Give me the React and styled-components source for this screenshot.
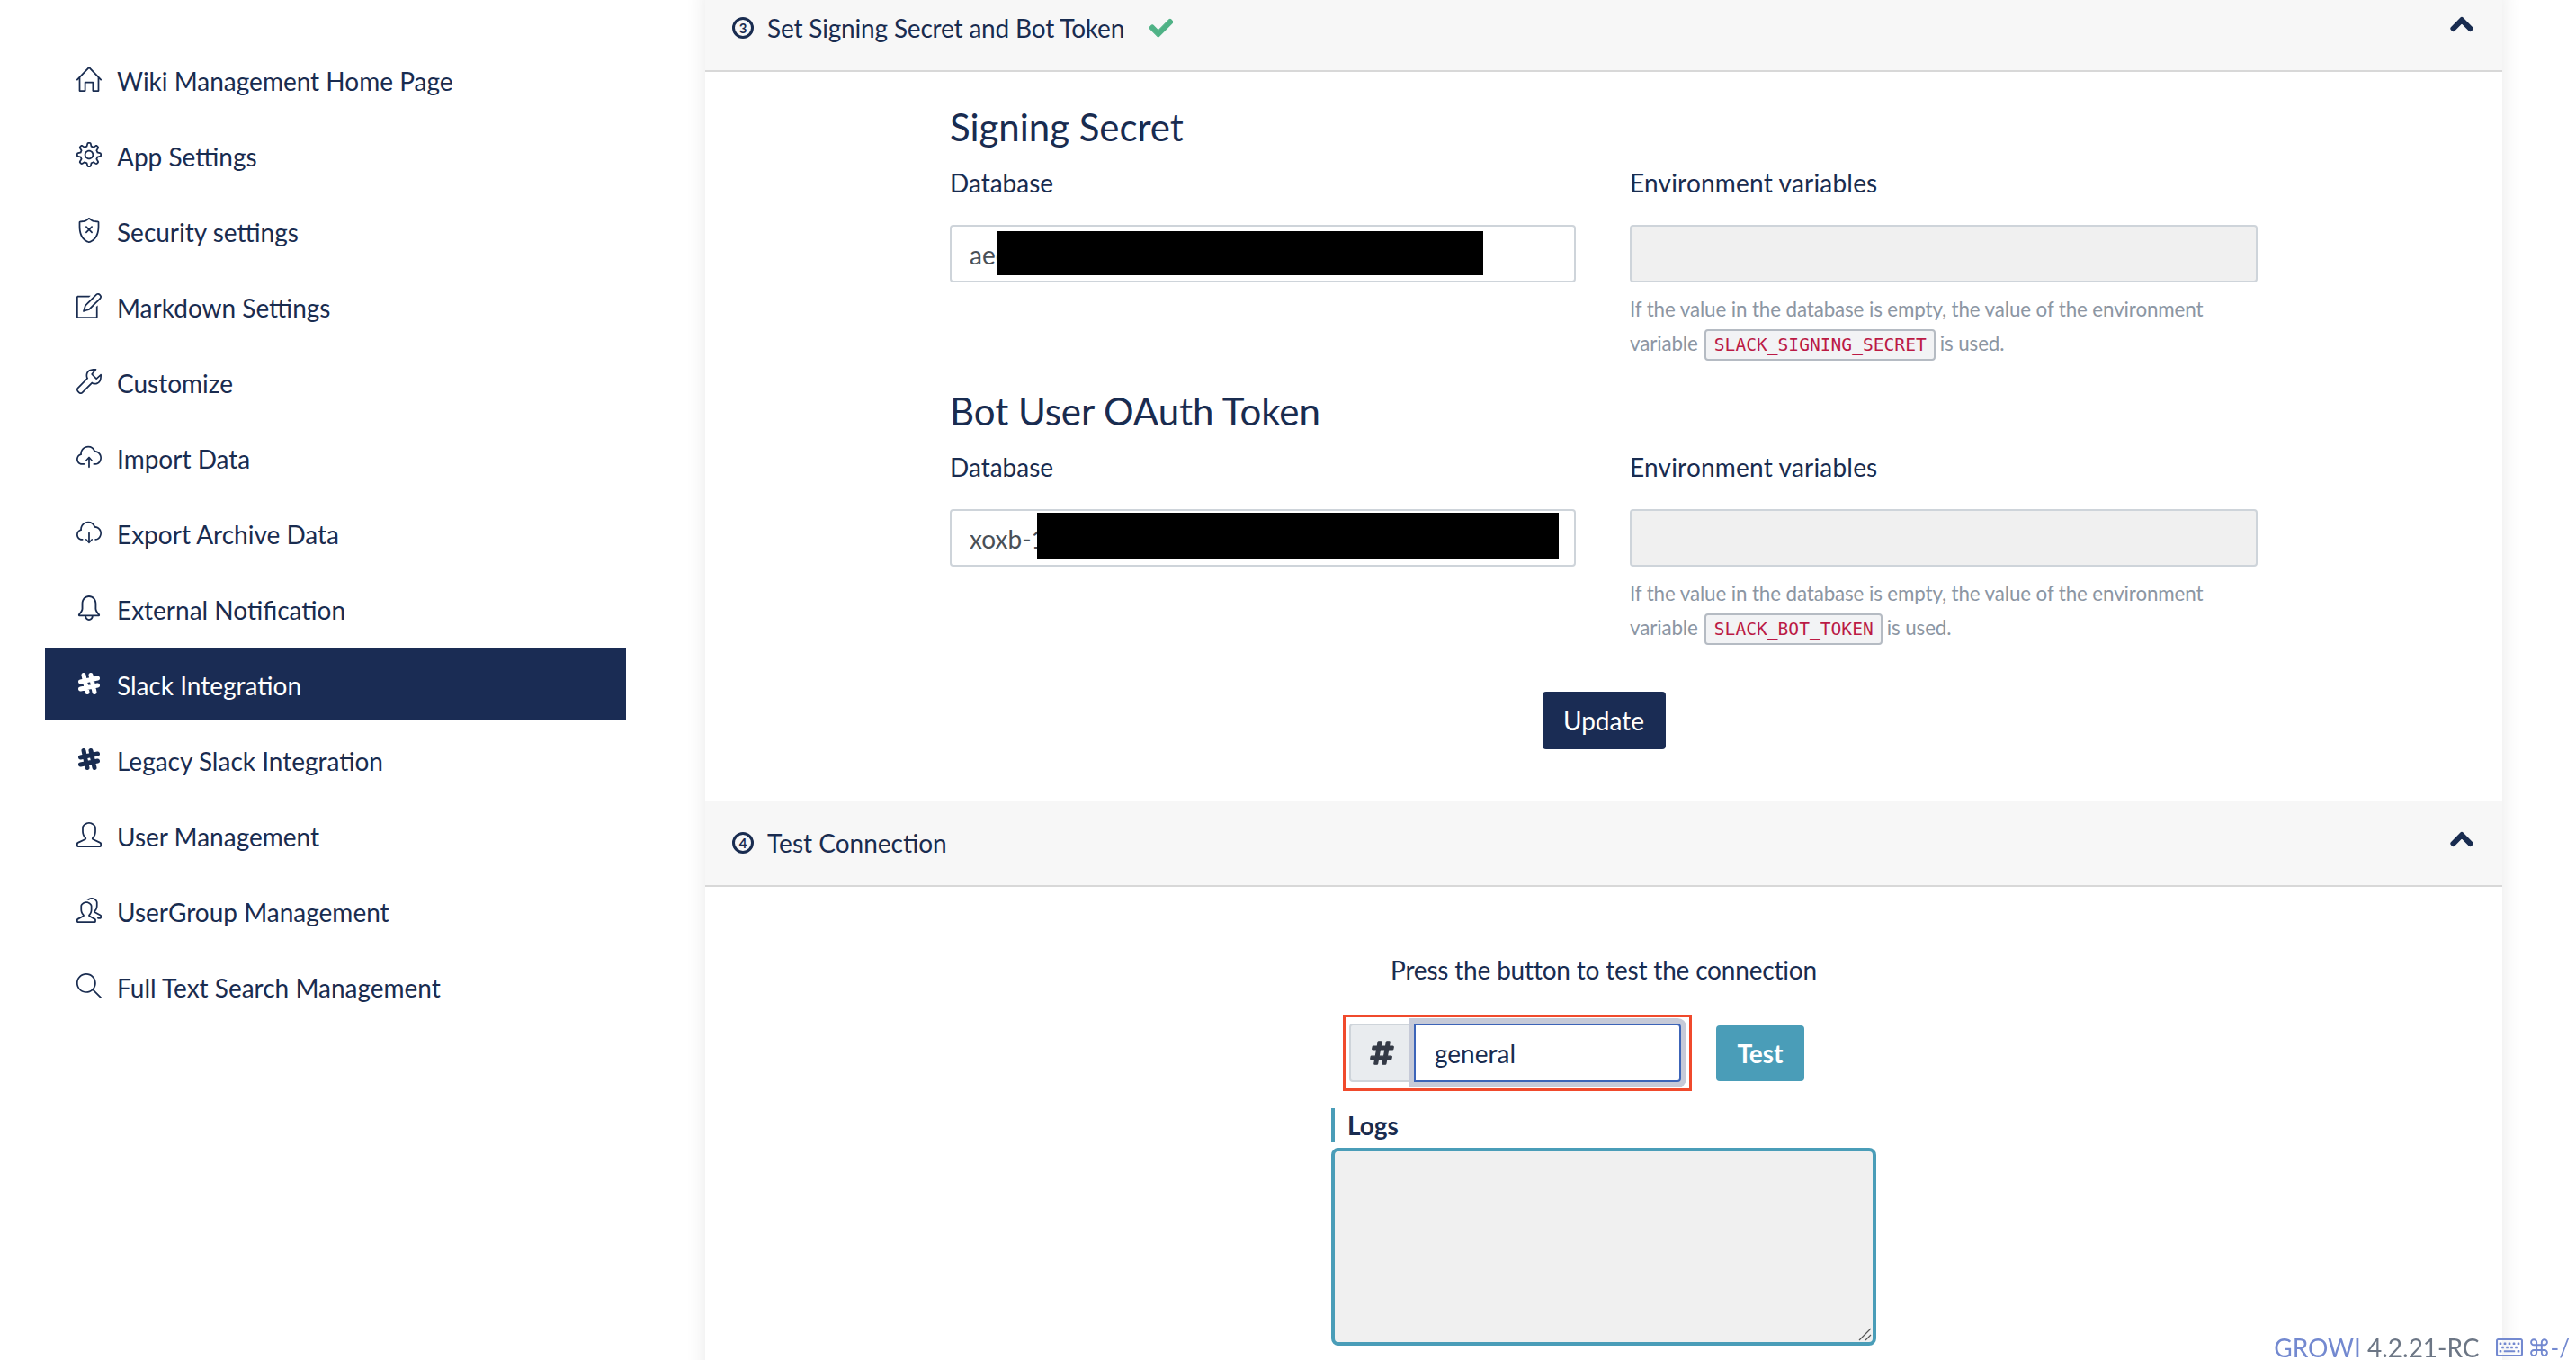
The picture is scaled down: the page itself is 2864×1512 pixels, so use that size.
import React from 'react';
import styled, { createGlobalStyle } from 'styled-components';
import { SlHome, SlSettings, SlShield, SlNote, SlWrench, SlCloudUpload, SlCloudDownload, SlBell, SlUser, SlPeople, SlMagnifier } from 'react-icons/sl';
import { FaCheck, FaChevronUp, FaHashtag, FaRegKeyboard } from 'react-icons/fa';

const navy = '#192c50';
const teal = '#4a9db8';

const Global = createGlobalStyle`
  html, body { margin: 0; padding: 0; background: #fff; height: 1512px; overflow: hidden; }
  body { font-family: Lato, "Noto Sans", sans-serif; font-size: 28px; color: ${navy}; }
  * { box-sizing: border-box; }
`;

const Page = styled.div`
  display: flex;
  align-items: flex-start;
  height: 1512px;
  overflow: hidden;
  padding-left: 50px;
  gap: 88px;
`;

const Sidebar = styled.nav`
  width: 646px;
  flex: none;
  padding-top: 48px;
  display: flex;
  flex-direction: column;
  gap: 4px;
`;

const NavItem = styled.a`
  height: 80px;
  display: flex;
  align-items: center;
  gap: 17px;
  padding: 3px 0 0 35px;
  font-size: 28px;
  color: ${p => (p.$active ? '#fff' : navy)};
  background: ${p => (p.$active ? '#1a2c54' : 'transparent')};
`;

const NavIcon = styled.span`
  width: 28px;
  height: 28px;
  flex: none;
  display: flex;
  align-items: center;
  justify-content: center;
  margin-top: -4px;
  font-size: 28px;
`;

const HashMark = styled.svg`
  width: 26px;
  height: 26px;
  fill: none;
  stroke: currentColor;
  stroke-width: 5;
  stroke-linecap: round;
`;

const Main = styled.main`
  width: 1998px;
  flex: none;
  margin-top: -16px;
  min-height: 1600px;
  background: #fff;
  box-shadow: 0 0 22px rgba(0, 0, 0, 0.09);
`;

const SectionHeader = styled.header`
  height: 96px;
  display: flex;
  align-items: center;
  padding: 0 31px 0 30px;
  background: #f7f7f7;
  border-bottom: 2px solid #d8d8d8;
  font-size: 28px;
`;

const StepBadge = styled.span`
  width: 24px;
  height: 24px;
  flex: none;
  margin-right: 15px;
  border: 3px solid ${navy};
  border-radius: 50%;
  display: flex;
  align-items: center;
  justify-content: center;
  font-size: 15px;
  font-weight: 700;
  line-height: 1;
`;

const HeaderTitle = styled.span`
  letter-spacing: ${p => (p.$tight ? '-0.18px' : '0')};
`;

const DoneMark = styled.span`
  display: flex;
  margin-left: 28px;
  color: #4fb286;
  font-size: 26px;
  svg { stroke: currentColor; stroke-width: 20; }
`;

const Collapse = styled.span`
  display: flex;
  margin-left: auto;
  margin-bottom: 8px;
  font-size: 28px;
  color: ${navy};
  svg { stroke: currentColor; stroke-width: 30; }
`;

const SecretsBody = styled.div`
  padding: 36px 272px 57px;
  display: flex;
  flex-direction: column;
  gap: 32px;
`;

const Block = styled.section``;

const BlockTitle = styled.h4`
  margin: 0 0 17px;
  font-size: 42px;
  font-weight: 400;
  line-height: 50px;
  letter-spacing: -0.05px;
`;

const Columns = styled.div`
  display: grid;
  grid-template-columns: 696px 698px;
  column-gap: 60px;
`;

const Label = styled.div`
  height: 42px;
  line-height: 41px;
  margin-bottom: 25px;
  letter-spacing: ${p => (p.$wide ? '0.2px' : '0')};
`;

const Field = styled.div`
  position: relative;
  height: 64px;
`;

const TextInput = styled.input`
  width: 100%;
  height: 64px;
  padding: 2px 20px 0;
  border: 2px solid #ced4da;
  border-radius: 4px;
  font: 400 28px Lato, sans-serif;
  color: #495057;
  background: ${p => (p.readOnly ? '#f0f0f0' : '#fff')};
  outline: none;
`;

const Redaction = styled.div`
  position: absolute;
  left: ${p => p.$left}px;
  top: ${p => p.$top}px;
  width: ${p => p.$width}px;
  height: ${p => p.$height}px;
  background: #000;
`;

const Help = styled.p`
  height: 75px;
  margin: 11px 0 0;
  font-size: 22.4px;
  line-height: 38px;
  letter-spacing: -0.13px;
  color: #8c96a3;
`;

const Code = styled.code`
  display: inline-block;
  height: 35px;
  line-height: 31px;
  padding: 0 8.5px;
  margin: 0 -1px 0 2px;
  border: 2px solid #b5bbc3;
  border-radius: 4px;
  background: #f2f3f5;
  color: #bb1a45;
  font-family: "DejaVu Sans Mono", monospace;
  font-size: 19.6px;
  letter-spacing: 0;
`;

const Actions = styled.div`
  display: flex;
  justify-content: center;
  margin-top: 21px;
`;

const PrimaryButton = styled.button`
  width: 137px;
  height: 64px;
  border: 0;
  border-radius: 4px;
  background: #1a2c54;
  color: #fff;
  font: 400 28px Lato, sans-serif;
`;

const TestBody = styled.div`
  padding-top: 71px;
  display: flex;
  flex-direction: column;
  align-items: center;
`;

const Hint = styled.div`
  height: 42px;
  line-height: 42px;
  margin-bottom: 29px;
  letter-spacing: -0.19px;
`;

const TestColumn = styled.div`
  width: 606px;
`;

const TestRow = styled.div`
  display: flex;
  align-items: center;
  gap: 27px;
  padding-left: 13px;
  margin-bottom: 19px;
`;

const Highlight = styled.div`
  width: 388px;
  height: 85px;
  padding: 7px 9px 7px 4px;
  border: 3px solid #f04a2c;
  display: flex;
`;

const Prepend = styled.span`
  width: 76px;
  flex: none;
  margin-right: -4px;
  padding-right: 4px;
  display: flex;
  align-items: center;
  justify-content: center;
  background: #e9ecef;
  border: 2px solid #ced4da;
  border-radius: 4px 0 0 4px;
  color: #343a46;
  font-size: 29px;
  svg { stroke: currentColor; stroke-width: 24; }
`;

const ChannelInput = styled.input`
  position: relative;
  z-index: 1;
  flex: 1;
  min-width: 0;
  padding: 0 21px;
  border: 2px solid #3c64b8;
  border-radius: 0 4px 4px 0;
  outline: none;
  font: 400 28px Lato, sans-serif;
  color: ${navy};
  box-shadow: 0 0 0 6px #c6cad8;
`;

const TestButton = styled.button`
  width: 98px;
  height: 62px;
  border: 0;
  border-radius: 4px;
  background: ${teal};
  color: #fff;
  font: 700 28px Lato, sans-serif;
`;

const LogsLabel = styled.div`
  height: 38px;
  line-height: 38px;
  padding-left: 14px;
  margin-bottom: 6px;
  border-left: 4px solid ${teal};
  font-weight: 700;
`;

const LogsBox = styled.div`
  position: relative;
  width: 606px;
  height: 220px;
`;

const LogsArea = styled.textarea`
  display: block;
  width: 100%;
  height: 100%;
  border: 4px solid ${teal};
  border-radius: 8px;
  background: #f0f0f0;
  outline: none;
  resize: none;
`;

const ResizeGrip = styled.svg`
  position: absolute;
  right: 5px;
  bottom: 5px;
  width: 16px;
  height: 16px;
`;

const Version = styled.footer`
  position: fixed;
  right: 7px;
  bottom: -5px;
  display: flex;
  align-items: center;
  line-height: 38px;
  font-size: 28px;
  color: #6c7685;
`;

const Brand = styled.span`
  color: #7389d0;
  margin-right: 7px;
`;

const Shortcut = styled.span`
  display: flex;
  align-items: center;
  gap: 5px;
  margin-left: 18px;
  color: #7389d0;
  font-size: 26px;
`;

const SlackHash = () => (
  <HashMark viewBox="0 0 26 26">
    <path d="M7 3.5 L11 22.5 M15 3.5 L19 22.5 M3.5 11 L22.5 7 M3.5 19 L22.5 15" />
  </HashMark>
);

const navItems = [
  [SlHome, 'Wiki Management Home Page'],
  [SlSettings, 'App Settings'],
  [SlShield, 'Security settings'],
  [SlNote, 'Markdown Settings'],
  [SlWrench, 'Customize'],
  [SlCloudUpload, 'Import Data'],
  [SlCloudDownload, 'Export Archive Data'],
  [SlBell, 'External Notification'],
  [SlackHash, 'Slack Integration', true],
  [SlackHash, 'Legacy Slack Integration'],
  [SlUser, 'User Management'],
  [SlPeople, 'UserGroup Management'],
  [SlMagnifier, 'Full Text Search Management'],
];

const Secret = ({ title, value, envName, redaction }) => (
  <Block>
    <BlockTitle>{title}</BlockTitle>
    <Columns>
      <div>
        <Label>Database</Label>
        <Field>
          <TextInput defaultValue={value} />
          <Redaction $left={redaction.left} $top={redaction.top} $width={redaction.width} $height={redaction.height} />
        </Field>
      </div>
      <div>
        <Label $wide>Environment variables</Label>
        <Field>
          <TextInput readOnly />
        </Field>
        <Help>
          If the value in the database is empty, the value of the environment variable <Code>{envName}</Code> is used.
        </Help>
      </div>
    </Columns>
  </Block>
);

const Header = ({ step, children, done }) => (
  <SectionHeader>
    <StepBadge>{step}</StepBadge>
    <HeaderTitle $tight={done}>{children}</HeaderTitle>
    {done && <DoneMark><FaCheck /></DoneMark>}
    <Collapse><FaChevronUp /></Collapse>
  </SectionHeader>
);

export default function App() {
  return (
    <>
      <Global />
      <Page>
        <Sidebar>
          {navItems.map(([Icon, label, active]) => (
            <NavItem key={label} $active={active}>
              <NavIcon><Icon /></NavIcon>
              {label}
            </NavItem>
          ))}
        </Sidebar>
        <Main>
          <Header step="3" done>Set Signing Secret and Bot Token</Header>
          <SecretsBody>
            <Secret title="Signing Secret" value="aec" envName="SLACK_SIGNING_SECRET" redaction={{ left: 53, top: 7, width: 540, height: 49 }} />
            <Secret title="Bot User OAuth Token" value="xoxb-1" envName="SLACK_BOT_TOKEN" redaction={{ left: 97, top: 4, width: 580, height: 52 }} />
            <Actions><PrimaryButton>Update</PrimaryButton></Actions>
          </SecretsBody>
          <Header step="4">Test Connection</Header>
          <TestBody>
            <Hint>Press the button to test the connection</Hint>
            <TestColumn>
              <TestRow>
                <Highlight>
                  <Prepend><FaHashtag /></Prepend>
                  <ChannelInput defaultValue="general" />
                </Highlight>
                <TestButton>Test</TestButton>
              </TestRow>
              <LogsLabel>Logs</LogsLabel>
              <LogsBox>
                <LogsArea readOnly />
                <ResizeGrip viewBox="0 0 16 16" fill="none" stroke="#555" strokeWidth="1.2">
                  <path d="M2 15 L15 2 M9 15 L15 9" />
                </ResizeGrip>
              </LogsBox>
            </TestColumn>
          </TestBody>
        </Main>
      </Page>
      <Version>
        <Brand>GROWI</Brand>4.2.21-RC
        <Shortcut><FaRegKeyboard size={30} />⌘-/</Shortcut>
      </Version>
    </>
  );
}
